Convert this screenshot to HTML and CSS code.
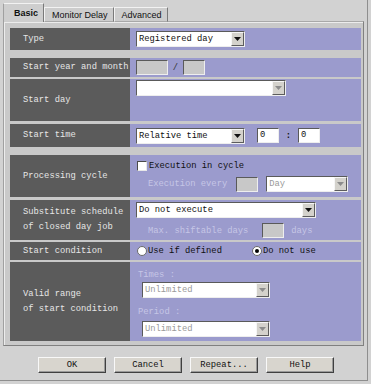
FILE: index.html
```html
<!DOCTYPE html>
<html lang="en">
<head>
    <meta charset="UTF-8">
    <title>Schedule definition</title>
    <link rel="stylesheet" href="styles.css">
</head>
<body>
    <div class="dialog">
        <!-- tabs -->
        <div class="tabs">
            <div class="tab active">Basic</div>
            <div class="tab">Monitor Delay</div>
            <div class="tab">Advanced</div>
        </div>

        <div class="panel">
            <!-- Type -->
            <div class="row r-type">
                <div class="label">Type</div>
                <div class="field">
                    <div class="select w-type">
                        <span class="val">Registered day</span>
                        <span class="arrow"><svg width="7" height="4" viewBox="0 0 7 4"><polygon points="0,0 7,0 3.5,4"/></svg></span>
                    </div>
                </div>
            </div>

            <!-- Start year and month -->
            <div class="row r-year">
                <div class="label">Start year and month</div>
                <div class="field">
                    <div class="box off w-year"></div>
                    <span class="sep">/</span>
                    <div class="box off w-small"></div>
                </div>
            </div>

            <!-- Start day -->
            <div class="row r-day">
                <div class="label">Start day</div>
                <div class="field top">
                    <div class="select w-day">
                        <span class="val"></span>
                        <span class="arrow dim"><svg width="7" height="4" viewBox="0 0 7 4"><polygon points="0,0 7,0 3.5,4"/></svg></span>
                    </div>
                </div>
            </div>

            <!-- Start time -->
            <div class="row r-time">
                <div class="label">Start time</div>
                <div class="field">
                    <div class="select w-type">
                        <span class="val">Relative time</span>
                        <span class="arrow"><svg width="7" height="4" viewBox="0 0 7 4"><polygon points="0,0 7,0 3.5,4"/></svg></span>
                    </div>
                    <div class="box w-small t-hour">0</div>
                    <span class="colon">:</span>
                    <div class="box w-small">0</div>
                </div>
            </div>

            <!-- Processing cycle -->
            <div class="row r-cycle">
                <div class="label">Processing cycle</div>
                <div class="field stack">
                    <div class="line">
                        <span class="check"></span>
                        <span class="txt">Execution in cycle</span>
                    </div>
                    <div class="line indent">
                        <span class="txt dis">Execution every</span>
                        <div class="box off w-small m-every"></div>
                        <div class="select off w-unit">
                            <span class="val">Day</span>
                            <span class="arrow dim"><svg width="7" height="4" viewBox="0 0 7 4"><polygon points="0,0 7,0 3.5,4"/></svg></span>
                        </div>
                    </div>
                </div>
            </div>

            <!-- Substitute schedule -->
            <div class="row r-subst">
                <div class="label">Substitute schedule<br>of closed day job</div>
                <div class="field stack">
                    <div class="select w-subst">
                        <span class="val">Do not execute</span>
                        <span class="arrow"><svg width="7" height="4" viewBox="0 0 7 4"><polygon points="0,0 7,0 3.5,4"/></svg></span>
                    </div>
                    <div class="line indent l-shift">
                        <span class="txt dis">Max. shiftable days</span>
                        <div class="box off w-small m-shift"></div>
                        <span class="txt dis m-days">days</span>
                    </div>
                </div>
            </div>

            <!-- Start condition -->
            <div class="row r-cond">
                <div class="label">Start condition</div>
                <div class="field">
                    <span class="radio"></span>
                    <span class="txt">Use if defined</span>
                    <span class="radio on m-radio"></span>
                    <span class="txt">Do not use</span>
                </div>
            </div>

            <!-- Valid range -->
            <div class="row r-range">
                <div class="label">Valid range<br>of start condition</div>
                <div class="field stack">
                    <span class="txt dis cap">Times :</span>
                    <div class="select off w-range">
                        <span class="val">Unlimited</span>
                        <span class="arrow dim"><svg width="7" height="4" viewBox="0 0 7 4"><polygon points="0,0 7,0 3.5,4"/></svg></span>
                    </div>
                    <span class="txt dis cap c-period">Period :</span>
                    <div class="select off w-range">
                        <span class="val">Unlimited</span>
                        <span class="arrow dim"><svg width="7" height="4" viewBox="0 0 7 4"><polygon points="0,0 7,0 3.5,4"/></svg></span>
                    </div>
                </div>
            </div>
        </div>

        <!-- buttons -->
        <div class="buttons">
            <button>OK</button>
            <button>Cancel</button>
            <button>Repeat...</button>
            <button>Help</button>
        </div>
    </div>
</body>
</html>
```

FILE: styles.css
```css
/* Reset */
body {
    margin: 0;
    padding: 0;
    background-color: #d2d2d2;
}

/* Dialog frame */
.dialog {
    width: 368px;
    height: 381px;
    box-sizing: border-box;
    padding: 3px 0 0 3px;
    border-right: 1px solid #8e8e8e;
    border-bottom: 1px solid #8e8e8e;
    font-family: "Liberation Mono", monospace;
    font-size: 8.8px;
}

/* Tabs */
.tabs {
    display: flex;
    align-items: flex-end;
    height: 19px;
    position: relative;
    z-index: 1;
    margin-bottom: -1px;
}

.tab {
    font-family: "Liberation Sans", Arial, sans-serif;
    font-size: 9px;
    color: #111;
    height: 15px;
    line-height: 14px;
    box-sizing: border-box;
    padding: 0 5px 0 7px;
    background-color: #cdcdcd;
    border-top: 1px solid #f2f2f2;
    border-left: 1px solid #f2f2f2;
    border-right: 1px solid #7a7a7a;
    border-bottom: 1px solid #a8a8a8;
}

.tab.active {
    font-weight: bold;
    height: 19px;
    line-height: 18px;
    width: 41px;
    padding: 0 0 0 10px;
    border-left-color: #a0a0a0;
    border-bottom: none;
    background-color: #cecece;
}

/* Panel */
.panel {
    width: 361px;
    box-sizing: border-box;
    padding: 6px 2px 4px 6px;
    background-color: #c9c9c9;
    border-top: 1px solid #a8a8a8;
    border-left: 1px solid #a0a0a0;
    border-right: 1px solid #808080;
    border-bottom: 1px solid #808080;
    box-shadow: inset 1px 1px 0 #ececec;
}

.row {
    display: grid;
    grid-template-columns: 120px 231px;
}

.label {
    background-color: #5b5b5b;
    color: #e6e6e6;
    padding-left: 13px;
    display: flex;
    align-items: center;
    line-height: 15px;
}

.field {
    background-color: #9b9bcd;
    display: flex;
    align-items: center;
    padding-left: 6px;
    color: #101010;
}

.field.top {
    align-items: flex-start;
    padding-top: 1px;
}

.field.stack {
    flex-direction: column;
    align-items: flex-start;
    justify-content: flex-start;
}

/* Row heights and gaps */
.r-type { height: 22px; }
.r-year { height: 19px; margin-top: 8px; }
.r-day { height: 42px; margin-top: 2px; }
.r-time { height: 23px; margin-top: 3px; }
.r-cycle { height: 42px; margin-top: 8px; }
.r-subst { height: 40px; margin-top: 3px; }
.r-cond { height: 18px; margin-top: 2px; }
.r-range { height: 79px; margin-top: 2px; }

/* Controls */
.select {
    display: flex;
    height: 16px;
    box-sizing: border-box;
    background-color: #fff;
    border: 1px solid;
    border-color: #5a5a5a #eeeeee #eeeeee #5a5a5a;
}

.select .val {
    flex: 1;
    padding-left: 2px;
    line-height: 14px;
    white-space: nowrap;
    overflow: hidden;
}

.select .arrow {
    width: 13px;
    box-sizing: border-box;
    background-color: #d4d2cc;
    border: 1px solid;
    border-color: #f6f6f6 #5c5c5c #5c5c5c #f6f6f6;
    display: flex;
    align-items: center;
    justify-content: center;
}

.select .arrow svg {
    fill: #111;
}

.select .arrow.dim svg {
    fill: #8c8c8c;
}

.select.off .val {
    color: #9a9a9a;
}

.box {
    height: 15px;
    box-sizing: border-box;
    background-color: #fff;
    border: 1px solid;
    border-color: #5a5a5a #eeeeee #eeeeee #5a5a5a;
    padding-left: 2px;
    line-height: 13px;
}

.box.off {
    background-color: #c8c8c8;
}

.w-type { width: 109px; }
.w-day { width: 150px; }
.w-subst { width: 180px; }
.w-unit { width: 82px; }
.w-range { width: 128px; margin-left: 6px; }
.w-year { width: 32px; }
.w-small { width: 22px; }

.sep {
    width: 15px;
    text-align: center;
    color: #333;
}

.t-hour { margin-left: 12px; }

.colon {
    width: 19px;
    text-align: center;
    font-weight: bold;
}

.line {
    display: flex;
    align-items: center;
}

.r-cycle .line:first-child {
    margin-top: 5px;
    height: 12px;
}

.r-cycle .line.indent {
    margin-top: 4px;
}

.indent {
    padding-left: 12px;
}

.r-subst .select {
    margin-top: 2px;
}

.l-shift {
    margin-top: 5px;
}

.txt {
    white-space: nowrap;
    line-height: 12px;
}

.txt.dis {
    color: #c6c6e6;
}

.m-every { margin-left: 9px; }
.m-every + .select { margin-left: 8px; }
.m-shift { margin-left: 14px; }
.m-days { margin-left: 7px; }

.check {
    width: 10px;
    height: 10px;
    box-sizing: border-box;
    margin: 0 2px 0 1px;
    background-color: #fff;
    border: 1px solid;
    border-color: #4a4a4a #e8e8e8 #e8e8e8 #4a4a4a;
}

.radio {
    width: 10px;
    height: 10px;
    box-sizing: border-box;
    margin: 0 1px 0 1px;
    border-radius: 50%;
    background-color: #fff;
    border: 1px solid #6a6a6a;
    display: flex;
    align-items: center;
    justify-content: center;
}

.radio.on::after {
    content: "";
    width: 4px;
    height: 4px;
    border-radius: 50%;
    background-color: #000;
}

.m-radio { margin-left: 30px; }

.cap {
    padding-left: 2px;
    margin-top: 7px;
    margin-bottom: 1px;
}

.c-period {
    margin-top: 8px;
    margin-bottom: 3px;
}

/* Buttons */
.buttons {
    display: flex;
    gap: 8px;
    padding-left: 35px;
    margin-top: 11px;
}

.buttons button {
    width: 68px;
    height: 16px;
    padding: 0;
    font-family: "Liberation Mono", monospace;
    font-size: 8.8px;
    color: #111;
    background-color: #d8d5ce;
    border: 1px solid;
    border-color: #f8f8f8 #404040 #404040 #f8f8f8;
    box-shadow: inset -1px -1px 0 #9a9a9a;
}
```
